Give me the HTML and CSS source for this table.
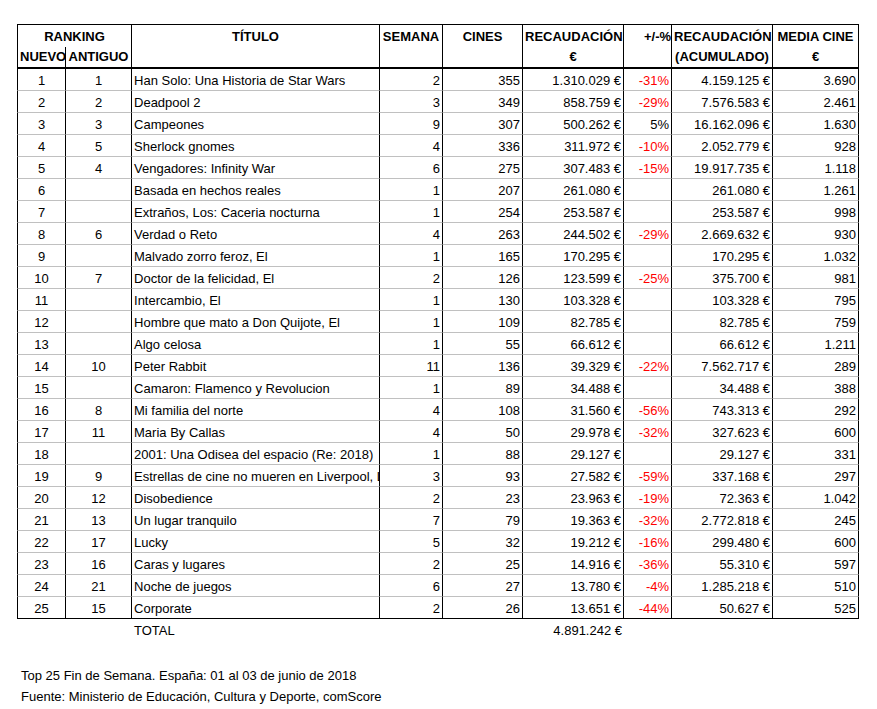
FILE: index.html
```html
<!DOCTYPE html>
<html lang="es">
<head>
<meta charset="utf-8">
<title>Top 25 Fin de Semana</title>
<link rel="stylesheet" href="styles.css">
</head>
<body>
<main class="page">
<table class="box">
  <colgroup>
    <col class="c-new"><col class="c-old"><col class="c-title"><col class="c-week"><col class="c-cines"><col class="c-rec"><col class="c-pct"><col class="c-acc"><col class="c-media">
  </colgroup>
  <thead>
    <tr class="h1">
      <th colspan="2" class="first">RANKING</th>
      <th rowspan="2">TÍTULO</th>
      <th rowspan="2">SEMANA</th>
      <th rowspan="2">CINES</th>
      <th rowspan="2">RECAUDACIÓN<br>€</th>
      <th rowspan="2" class="right">+/-%</th>
      <th rowspan="2">RECAUDACIÓN<br>(ACUMULADO)</th>
      <th rowspan="2">MEDIA CINE<br>€</th>
    </tr>
    <tr class="h2">
      <th class="first">NUEVO</th>
      <th>ANTIGUO</th>
    </tr>
  </thead>
  <tbody>
    <tr><td class="first">1</td><td>1</td><td class="t">Han Solo: Una Historia de Star Wars</td><td class="n">2</td><td class="n">355</td><td class="n">1.310.029 €</td><td class="n neg">-31%</td><td class="n">4.159.125 €</td><td class="n">3.690</td></tr>
    <tr><td class="first">2</td><td>2</td><td class="t">Deadpool 2</td><td class="n">3</td><td class="n">349</td><td class="n">858.759 €</td><td class="n neg">-29%</td><td class="n">7.576.583 €</td><td class="n">2.461</td></tr>
    <tr><td class="first">3</td><td>3</td><td class="t">Campeones</td><td class="n">9</td><td class="n">307</td><td class="n">500.262 €</td><td class="n">5%</td><td class="n">16.162.096 €</td><td class="n">1.630</td></tr>
    <tr><td class="first">4</td><td>5</td><td class="t">Sherlock gnomes</td><td class="n">4</td><td class="n">336</td><td class="n">311.972 €</td><td class="n neg">-10%</td><td class="n">2.052.779 €</td><td class="n">928</td></tr>
    <tr><td class="first">5</td><td>4</td><td class="t">Vengadores: Infinity War</td><td class="n">6</td><td class="n">275</td><td class="n">307.483 €</td><td class="n neg">-15%</td><td class="n">19.917.735 €</td><td class="n">1.118</td></tr>
    <tr><td class="first">6</td><td></td><td class="t">Basada en hechos reales</td><td class="n">1</td><td class="n">207</td><td class="n">261.080 €</td><td class="n"></td><td class="n">261.080 €</td><td class="n">1.261</td></tr>
    <tr><td class="first">7</td><td></td><td class="t">Extraños, Los: Caceria nocturna</td><td class="n">1</td><td class="n">254</td><td class="n">253.587 €</td><td class="n"></td><td class="n">253.587 €</td><td class="n">998</td></tr>
    <tr><td class="first">8</td><td>6</td><td class="t">Verdad o Reto</td><td class="n">4</td><td class="n">263</td><td class="n">244.502 €</td><td class="n neg">-29%</td><td class="n">2.669.632 €</td><td class="n">930</td></tr>
    <tr><td class="first">9</td><td></td><td class="t">Malvado zorro feroz, El</td><td class="n">1</td><td class="n">165</td><td class="n">170.295 €</td><td class="n"></td><td class="n">170.295 €</td><td class="n">1.032</td></tr>
    <tr><td class="first">10</td><td>7</td><td class="t">Doctor de la felicidad, El</td><td class="n">2</td><td class="n">126</td><td class="n">123.599 €</td><td class="n neg">-25%</td><td class="n">375.700 €</td><td class="n">981</td></tr>
    <tr><td class="first">11</td><td></td><td class="t">Intercambio, El</td><td class="n">1</td><td class="n">130</td><td class="n">103.328 €</td><td class="n"></td><td class="n">103.328 €</td><td class="n">795</td></tr>
    <tr><td class="first">12</td><td></td><td class="t">Hombre que mato a Don Quijote, El</td><td class="n">1</td><td class="n">109</td><td class="n">82.785 €</td><td class="n"></td><td class="n">82.785 €</td><td class="n">759</td></tr>
    <tr><td class="first">13</td><td></td><td class="t">Algo celosa</td><td class="n">1</td><td class="n">55</td><td class="n">66.612 €</td><td class="n"></td><td class="n">66.612 €</td><td class="n">1.211</td></tr>
    <tr><td class="first">14</td><td>10</td><td class="t">Peter Rabbit</td><td class="n">11</td><td class="n">136</td><td class="n">39.329 €</td><td class="n neg">-22%</td><td class="n">7.562.717 €</td><td class="n">289</td></tr>
    <tr><td class="first">15</td><td></td><td class="t">Camaron: Flamenco y Revolucion</td><td class="n">1</td><td class="n">89</td><td class="n">34.488 €</td><td class="n"></td><td class="n">34.488 €</td><td class="n">388</td></tr>
    <tr><td class="first">16</td><td>8</td><td class="t">Mi familia del norte</td><td class="n">4</td><td class="n">108</td><td class="n">31.560 €</td><td class="n neg">-56%</td><td class="n">743.313 €</td><td class="n">292</td></tr>
    <tr><td class="first">17</td><td>11</td><td class="t">Maria By Callas</td><td class="n">4</td><td class="n">50</td><td class="n">29.978 €</td><td class="n neg">-32%</td><td class="n">327.623 €</td><td class="n">600</td></tr>
    <tr><td class="first">18</td><td></td><td class="t">2001: Una Odisea del espacio (Re: 2018)</td><td class="n">1</td><td class="n">88</td><td class="n">29.127 €</td><td class="n"></td><td class="n">29.127 €</td><td class="n">331</td></tr>
    <tr><td class="first">19</td><td>9</td><td class="t">Estrellas de cine no mueren en Liverpool, L</td><td class="n">3</td><td class="n">93</td><td class="n">27.582 €</td><td class="n neg">-59%</td><td class="n">337.168 €</td><td class="n">297</td></tr>
    <tr><td class="first">20</td><td>12</td><td class="t">Disobedience</td><td class="n">2</td><td class="n">23</td><td class="n">23.963 €</td><td class="n neg">-19%</td><td class="n">72.363 €</td><td class="n">1.042</td></tr>
    <tr><td class="first">21</td><td>13</td><td class="t">Un lugar tranquilo</td><td class="n">7</td><td class="n">79</td><td class="n">19.363 €</td><td class="n neg">-32%</td><td class="n">2.772.818 €</td><td class="n">245</td></tr>
    <tr><td class="first">22</td><td>17</td><td class="t">Lucky</td><td class="n">5</td><td class="n">32</td><td class="n">19.212 €</td><td class="n neg">-16%</td><td class="n">299.480 €</td><td class="n">600</td></tr>
    <tr><td class="first">23</td><td>16</td><td class="t">Caras y lugares</td><td class="n">2</td><td class="n">25</td><td class="n">14.916 €</td><td class="n neg">-36%</td><td class="n">55.310 €</td><td class="n">597</td></tr>
    <tr><td class="first">24</td><td>21</td><td class="t">Noche de juegos</td><td class="n">6</td><td class="n">27</td><td class="n">13.780 €</td><td class="n neg">-4%</td><td class="n">1.285.218 €</td><td class="n">510</td></tr>
    <tr class="last"><td class="first">25</td><td>15</td><td class="t">Corporate</td><td class="n">2</td><td class="n">26</td><td class="n">13.651 €</td><td class="n neg">-44%</td><td class="n">50.627 €</td><td class="n">525</td></tr>
  </tbody>
  <tfoot>
    <tr class="total"><td></td><td></td><td class="t">TOTAL</td><td></td><td></td><td class="n">4.891.242 €</td><td></td><td></td><td></td></tr>
  </tfoot>
</table>
<footer class="notes">
  <p>Top 25 Fin de Semana. España: 01 al 03 de junio de 2018</p>
  <p>Fuente: Ministerio de Educación, Cultura y Deporte, comScore</p>
</footer>
</main>
</body>
</html>
```
FILE: styles.css
```css
* { box-sizing: border-box; }
html, body { margin: 0; padding: 0; background: #fff; }
body {
  font-family: "Liberation Sans", Arial, sans-serif;
  font-size: 13px;
  color: #000;
}
.page { padding: 24px 0 0 17px; }
.box {
  border-collapse: separate;
  border-spacing: 0;
  table-layout: fixed;
  width: 842px;
  border-top: 1px solid #000;
}
.c-new { width: 49px; }
.c-old { width: 66px; }
.c-title { width: 248px; }
.c-week { width: 63px; }
.c-cines { width: 80px; }
.c-rec { width: 101px; }
.c-pct { width: 48px; }
.c-acc { width: 101px; }
.c-media { width: 86px; }

th, td {
  padding: 0 2px;
  white-space: nowrap;
  overflow: hidden;
  text-overflow: clip;
  border-right: 1px solid #000;
}
th.first, td.first { border-left: 1px solid #000; }

thead th {
  font-weight: bold;
  text-align: center;
  vertical-align: top;
  line-height: 20px;
}
thead th.right { text-align: right; }
.h1 th { height: 22px; padding-top: 2px; }
.h1 th[rowspan] { border-bottom: 2px solid #000; }
.h2 th { height: 22px; padding-top: 0; border-bottom: 2px solid #000; }
thead th:nth-child(6), thead th:nth-child(8) { padding-left: 0; padding-right: 0; }

tbody td {
  height: 22px;
  line-height: 19px;
  padding-top: 2px;
  border-bottom: 1px solid #c0c0c0;
  text-align: center;
}
tbody tr.last td { border-bottom: 1px solid #000; }
td.t { text-align: left; padding-left: 2px; }
td.n { text-align: right; padding-right: 2px; }
td.neg { color: #ff0000; }

tfoot td { border: 0; height: 22px; line-height: 20px; padding-top: 2px; }

.notes { margin-top: 24px; padding-left: 4px; }
.notes p { margin: 0; line-height: 21px; }
```
